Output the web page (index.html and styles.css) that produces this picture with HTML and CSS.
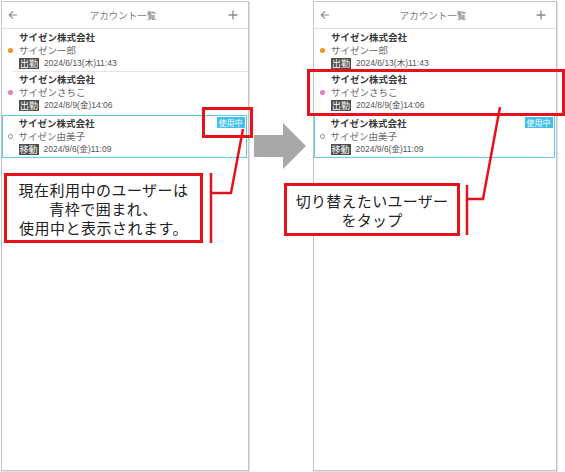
FILE: index.html
```html
<!DOCTYPE html>
<html lang="ja">
<head>
<meta charset="UTF-8" />
<meta name="viewport" content="width=device-width, initial-scale=1" />
<title>アカウント一覧 - 切り替え</title>
<link rel="stylesheet" href="styles.css">
</head>
<body>

<div class="page">

  <div class="phone phone-left">
    <div class="bar">
      <svg class="bar-ico" width="10" height="10" viewBox="0 0 10 10"><path d="M9 5H1.5M5 1.3L1.3 5 5 8.7" fill="none" stroke="#8a8a8a" stroke-width="1.2"/></svg>
      <span class="bar-title">アカウント一覧</span>
      <svg class="bar-ico" width="10" height="10" viewBox="0 0 10 10"><path d="M5 0.5v9M0.5 5h9" fill="none" stroke="#8a8a8a" stroke-width="1.3"/></svg>
    </div>

    <div class="acct">
      <div class="dot-col"><span class="dot dot-orange"></span></div>
      <div class="acct-body">
        <div class="company">サイゼン株式会社</div>
        <div class="name">サイゼン一郎</div>
        <div class="log"><span class="tag">出勤</span><span class="time">2024/6/13(木)11:43</span></div>
      </div>
    </div>
    <div class="acct acct-2">
      <div class="dot-col"><span class="dot dot-pink"></span></div>
      <div class="acct-body">
        <div class="company">サイゼン株式会社</div>
        <div class="name">サイゼンさちこ</div>
        <div class="log"><span class="tag">出勤</span><span class="time">2024/8/9(金)14:06</span></div>
      </div>
    </div>
    <div class="acct acct-current">
      <div class="dot-col"><span class="dot dot-empty"></span></div>
      <div class="acct-body">
        <div class="company">サイゼン株式会社</div>
        <div class="name">サイゼン由美子</div>
        <div class="log"><span class="tag">移動</span><span class="time">2024/9/6(金)11:09</span></div>
      </div>
      <span class="in-use">使用中</span>
    </div>
  </div>

  <div class="gap">
    <svg width="54" height="48" viewBox="0 0 54 48"><polygon points="0,12 29,12 29,0 52,23 29,46 29,34 0,34" fill="#a8a8a8"/></svg>
  </div>

  <div class="phone phone-right">
    <div class="bar">
      <svg class="bar-ico" width="10" height="10" viewBox="0 0 10 10"><path d="M9 5H1.5M5 1.3L1.3 5 5 8.7" fill="none" stroke="#8a8a8a" stroke-width="1.2"/></svg>
      <span class="bar-title">アカウント一覧</span>
      <svg class="bar-ico" width="10" height="10" viewBox="0 0 10 10"><path d="M5 0.5v9M0.5 5h9" fill="none" stroke="#8a8a8a" stroke-width="1.3"/></svg>
    </div>

    <div class="acct">
      <div class="dot-col"><span class="dot dot-orange"></span></div>
      <div class="acct-body">
        <div class="company">サイゼン株式会社</div>
        <div class="name">サイゼン一郎</div>
        <div class="log"><span class="tag">出勤</span><span class="time">2024/6/13(木)11:43</span></div>
      </div>
    </div>
    <div class="acct acct-2">
      <div class="dot-col"><span class="dot dot-pink"></span></div>
      <div class="acct-body">
        <div class="company">サイゼン株式会社</div>
        <div class="name">サイゼンさちこ</div>
        <div class="log"><span class="tag">出勤</span><span class="time">2024/8/9(金)14:06</span></div>
      </div>
    </div>
    <div class="acct acct-current">
      <div class="dot-col"><span class="dot dot-empty"></span></div>
      <div class="acct-body">
        <div class="company">サイゼン株式会社</div>
        <div class="name">サイゼン由美子</div>
        <div class="log"><span class="tag">移動</span><span class="time">2024/9/6(金)11:09</span></div>
      </div>
      <span class="in-use">使用中</span>
    </div>
  </div>

  <!-- 注釈 -->
  <div class="note note-left">現在利用中のユーザーは<br>青枠で囲まれ、<br>使用中と表示されます。</div>
  <div class="note note-right">切り替えたいユーザー<br>をタップ</div>

  <svg class="marks" width="565" height="472" viewBox="0 0 565 472">
    <g fill="none" stroke="#e5121b">
      <rect x="203.5" y="108.5" width="48" height="28" stroke-width="3"/>
      <rect x="308.5" y="70.5" width="255" height="44" stroke-width="3"/>
      <path d="M211 173V243M211 193H231L243 129" stroke-width="2.5"/>
      <path d="M467 185V235M467 199H483L500 107" stroke-width="2.5"/>
    </g>
  </svg>

</div>

</body>
</html>
```

FILE: styles.css
```css
body {
  margin: 0;
  background: #fff;
  font-family: "Noto Sans CJK JP", "Noto Sans", sans-serif;
  color: #333;
}
.page {
  position: relative;
  width: 565px;
  height: 472px;
  display: flex;
  align-items: flex-start;
  padding: 1px 0 0 1px;
  box-sizing: border-box;
  overflow: hidden;
}
.phone {
  height: 470px;
  border: 1px solid #c4c4c4;
  box-shadow: 1px 1px 0 #e2e2e2;
  box-sizing: border-box;
  background: #fff;
}
.phone-left {
  width: 248px;
}
.phone-right {
  width: 244px;
}
.gap {
  width: 64px;
  padding: 122px 0 0 5px;
  box-sizing: border-box;
}
.gap svg {
  display: block;
}
.bar {
  height: 27px;
  border-bottom: 1px solid #e0e0e0;
  box-sizing: border-box;
  display: flex;
  align-items: center;
  padding: 0 10px 0 6px;
}
.bar-ico {
  display: block;
}
.bar-title {
  flex: 1;
  text-align: center;
  font-size: 9.5px;
  color: #7c7c7c;
}
.acct {
  position: relative;
  display: flex;
  height: 43px;
  padding-top: 2px;
  box-sizing: border-box;
  background: linear-gradient(#e4e4e4, #e4e4e4) 11px 100% / calc(100% - 11px) 1px no-repeat;
}
.acct-2 {
  padding-top: 1px;
  background: none;
}
.acct-current {
  margin-right: 1px;
  padding-top: 0.5px;
  border: 1.5px solid #5fcbea;
  background: none;
}
.dot-col {
  width: 17px;
  flex: none;
  display: flex;
  justify-content: center;
  align-items: flex-start;
}
.acct-current .dot-col {
  width: 15.5px;
}
.dot {
  width: 5px;
  height: 5px;
  border-radius: 50%;
  margin-top: 17px;
  box-sizing: border-box;
}
.dot-orange {
  background: #f0911c;
}
.dot-pink {
  background: #e97ab8;
}
.dot-empty {
  border: 1px solid #8a8a8a;
}
.company {
  font-size: 9.5px;
  line-height: 13px;
  font-weight: bold;
  color: #3a3a3a;
}
.name {
  font-size: 9.5px;
  line-height: 13px;
  color: #6e6e6e;
}
.log {
  display: flex;
  align-items: center;
  height: 13px;
}
.tag {
  background: #4d4d4d;
  color: #fff;
  font-size: 9px;
  line-height: 11px;
  padding: 0 1px;
  margin-right: 5px;
}
.time {
  font-family: "Liberation Sans", "Noto Sans CJK JP", sans-serif;
  font-size: 8.5px;
  line-height: 11px;
  color: #555;
}
.in-use {
  position: absolute;
  top: 0.5px;
  right: 1.5px;
  width: 28px;
  height: 11px;
  background: #3fc1ea;
  color: #fff;
  font-size: 8px;
  line-height: 11px;
  text-align: center;
}
.note {
  position: absolute;
  border: 3px solid #e5121b;
  background: #fff;
  box-sizing: border-box;
  text-align: center;
  color: #222;
  font-size: 15px;
  display: flex;
  align-items: center;
  justify-content: center;
}
.note-left {
  left: 4px;
  top: 173px;
  width: 199px;
  height: 70px;
  line-height: 19px;
  letter-spacing: 0.5px;
}
.note-right {
  left: 284px;
  top: 183px;
  width: 176px;
  height: 53px;
  line-height: 19px;
  letter-spacing: 0.3px;
}
.marks {
  position: absolute;
  left: 0;
  top: 0;
  pointer-events: none;
}
```
